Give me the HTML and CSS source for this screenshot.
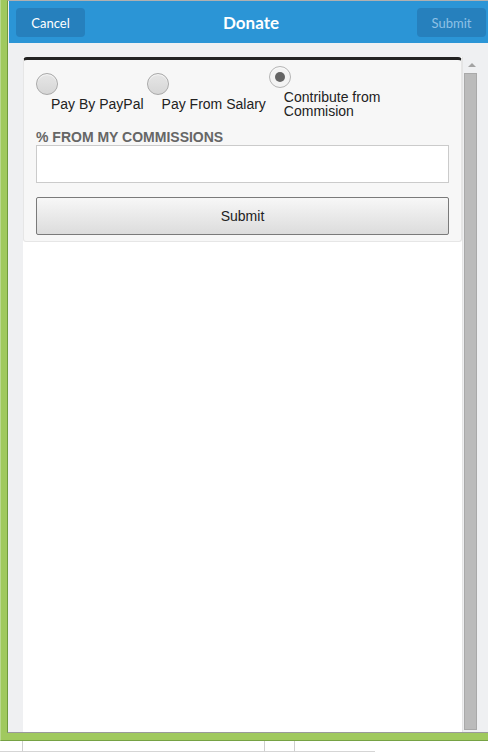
FILE: index.html
```html
<!DOCTYPE html>
<html lang="en">
<head>
    <meta charset="UTF-8">
    <meta name="viewport" content="width=device-width, initial-scale=1.0">
    <title>Donate</title>
    <link rel="stylesheet" href="styles.css">
</head>
<body>
    <div class="frame">
        <div class="window">
            <div class="header">
                <button class="hdr-btn">Cancel</button>
                <div class="hdr-title">Donate</div>
                <button class="hdr-btn disabled">Submit</button>
            </div>

            <div class="content">
                <div class="panel">
                    <div class="card">
                        <div class="options">
                            <label class="option low">
                                <span class="radio"></span>
                                <span class="option-text">Pay By PayPal</span>
                            </label>
                            <label class="option low">
                                <span class="radio"></span>
                                <span class="option-text">Pay From Salary</span>
                            </label>
                            <label class="option">
                                <span class="radio checked"></span>
                                <span class="option-text">Contribute from Commision</span>
                            </label>
                        </div>

                        <div class="field-label">% FROM MY COMMISSIONS</div>
                        <div class="field-input"></div>

                        <button class="submit-btn">Submit</button>
                    </div>
                </div>

                <div class="scroll-col">
                    <div class="scroll-arrow"></div>
                    <div class="scroll-thumb"></div>
                </div>
            </div>
        </div>
    </div>

    <div class="below">
        <div class="cell c1"></div>
        <div class="cell c2"></div>
        <div class="cell c3"></div>
        <div class="cell c4"></div>
    </div>
</body>
</html>
```

FILE: styles.css
```css
* {
    margin: 0;
    padding: 0;
    box-sizing: border-box;
}

body {
    width: 488px;
    height: 752px;
    overflow: hidden;
    background: #fff;
    font-family: 'Liberation Sans', Arial, sans-serif;
    color: #222;
}

/* green outer frame */
.frame {
    width: 493px;
    height: 741px;
    background: #a0c95e;
    border-left: 1px solid #b9d88e;
    border-bottom: 1px solid #76a244;
    padding: 0 0 7px 6px;
}

.window {
    height: 100%;
    display: flex;
    flex-direction: column;
    border-left: 1px solid #6f9a3d;
    border-top: 1px solid #b0b0b0;
    border-bottom: 1px solid #9a9a9a;
    background: #eff0f2;
    padding-left: 1px;
}

.header {
    height: 42px;
    background: #2b95d6;
    display: flex;
    align-items: center;
    justify-content: space-between;
    padding: 0 7px;
    flex-shrink: 0;
}

.hdr-btn {
    width: 69px;
    height: 29px;
    border: none;
    border-radius: 4px;
    background: #2680bd;
    color: #fff;
    font-family: Lato, 'Open Sans', sans-serif;
    font-size: 13px;
    margin-top: 1px;
}

.hdr-btn.disabled {
    color: #8ec0e6;
}

.hdr-title {
    color: #fff;
    font-family: Lato, 'Open Sans', sans-serif;
    font-weight: bold;
    font-size: 17px;
    margin-top: 1px;
}

.content {
    flex: 1;
    display: flex;
    padding: 14px 0 0 14px;
}

.panel {
    width: 439px;
    background: #fff;
}

.card {
    background: #f7f7f7;
    border: 1px solid #e6e6e6;
    border-top: 3px solid #222;
    border-radius: 4px 4px 3px 3px;
    padding: 6px 12px 6px 12px;
}

.options {
    display: flex;
    align-items: flex-start;
    gap: 3px;
}

.option {
    display: flex;
    flex-direction: column;
    font-size: 14px;
    line-height: 14px;
}

.option.low {
    margin-top: 7px;
}

.option:last-child {
    flex: 1;
}

.radio {
    width: 22px;
    height: 22px;
    border-radius: 50%;
    border: 1px solid #a9a9a9;
    background: linear-gradient(#e6e6e6, #d6d6d6);
    box-shadow: inset 0 1px 1px rgba(255,255,255,0.7);
    position: relative;
}

.radio.checked {
    background: #f3f3f3;
    border-color: #b5b5b5;
}

.radio.checked::after {
    content: '';
    position: absolute;
    left: 5px;
    top: 5px;
    width: 10px;
    height: 10px;
    border-radius: 50%;
    background: #646464;
}

.option-text {
    margin: 2px 0 0 15px;
    color: #222;
}

.field-label {
    margin-top: 11px;
    font-size: 14px;
    font-weight: bold;
    color: #666;
    line-height: 16px;
}

.field-input {
    height: 38px;
    background: #fff;
    border: 1px solid #cbcbcb;
}

.submit-btn {
    display: block;
    width: 100%;
    height: 38px;
    margin-top: 14px;
    border: 1px solid #7a7a7a;
    border-radius: 2px;
    background: linear-gradient(#f7f7f7, #dcdcdc);
    font-family: 'Liberation Sans', Arial, sans-serif;
    font-size: 14px;
    color: #222;
}

.scroll-col {
    width: 31px;
    border-left: 1px solid #e4e4e4;
    display: flex;
    flex-direction: column;
    padding-left: 1px;
}

.scroll-arrow {
    width: 0;
    height: 0;
    margin: 6px 0 0 4px;
    border-left: 4px solid transparent;
    border-right: 4px solid transparent;
    border-bottom: 4px solid #a3a3a3;
}

.scroll-thumb {
    width: 13px;
    height: 657px;
    margin-top: 6px;
    background: #bbb;
    border: 1px solid #a9a9a9;
}

/* page grid lines under the frame */
.below {
    display: flex;
    height: 11px;
}

.cell {
    height: 11px;
    border-bottom: 1px solid #d5d5d5;
    border-right: 1px solid #cfcfcf;
}

.c1 { width: 23px; }
.c2 { width: 242px; }
.c3 { width: 30px; }
.c4 { width: 80px; border-right: none; }
```
